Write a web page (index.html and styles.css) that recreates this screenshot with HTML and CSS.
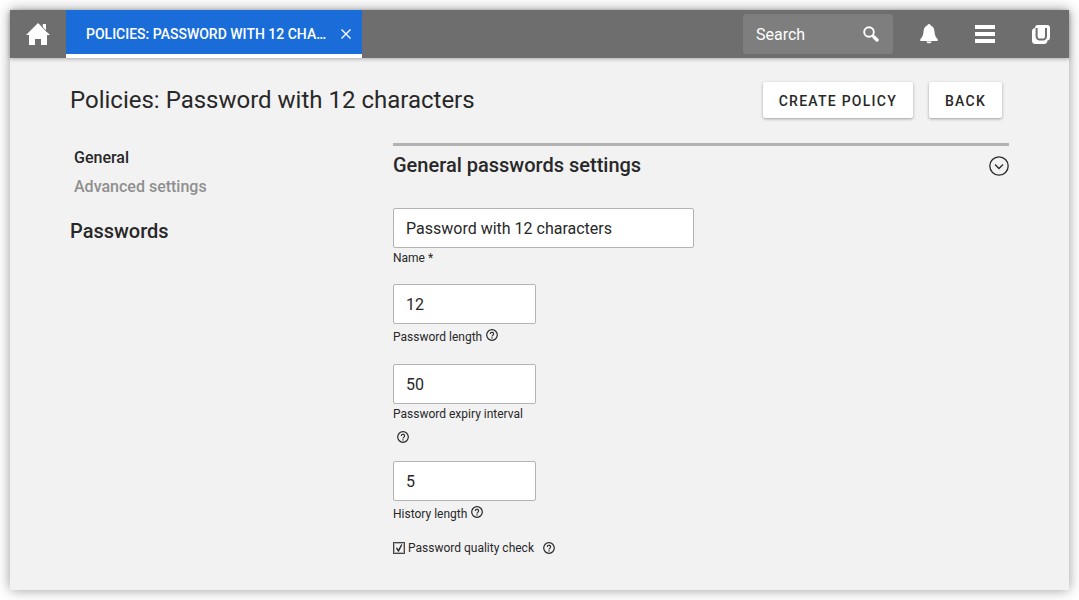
FILE: index.html
```html
<!DOCTYPE html>
<html lang="en">
<head>
<meta charset="utf-8">
<meta name="viewport" content="width=device-width, initial-scale=1">
<title>Policies: Password with 12 characters</title>
<link rel="stylesheet" href="styles.css">
</head>
<body>
<svg class="sprite" aria-hidden="true">
  <symbol id="help" viewBox="0 0 12 12">
    <circle cx="6" cy="6" r="5.3" fill="none" stroke="currentColor" stroke-width="1.2"/>
    <path d="M4.4 4.9a1.6 1.6 0 1 1 2.6 1.2C6.3 6.6 6 6.8 6 7.5" fill="none" stroke="currentColor" stroke-width="1.2"/>
    <path d="M5.4 8.2h1.2v1.2H5.4z" fill="currentColor"/>
  </symbol>
</svg>
<div class="window">
  <header class="topbar">
    <button class="icon-button" type="button" aria-label="Home">
      <svg width="24" height="24" viewBox="0 0 24 24"><path d="M12 1 L16.8 5.8 V2 H20 V9 L24 13 H21 V23 H15 V17 H9 V23 H3 V13 H0 Z" fill="#fff"/><path d="M15.8 4.6 L21.6 10.4" stroke="#6e6e6e" stroke-width="1"/></svg>
    </button>
    <div class="tab">
      <span class="tab-title">Policies: Password with 12 characters</span>
      <button class="tab-close" type="button" aria-label="Close tab">
        <svg width="10" height="10" viewBox="0 0 10 10"><path d="M.5 .5l9 9M9.5 .5l-9 9" stroke="#fff" stroke-width="1.4"/></svg>
      </button>
    </div>
    <div class="search">
      <input class="search-input" type="text" placeholder="Search" aria-label="Search">
      <svg width="16" height="16" viewBox="0 0 16 16"><circle cx="6" cy="6" r="4.8" fill="none" stroke="#fff" stroke-width="1.9"/><path d="M9.4 9.4l1.4 1.4" stroke="#fff" stroke-width="2"/><path d="M11 11l3 3" stroke="#fff" stroke-width="3.4" stroke-linecap="round"/></svg>
    </div>
    <nav class="tools">
      <button class="icon-button" type="button" aria-label="Notifications">
        <svg width="20" height="20" viewBox="0 0 20 20"><path d="M10 0a1.7 1.7 0 0 1 1.7 1.6c2.2.8 3.4 2.9 3.7 5.4.3 3.2.8 6 3.1 8 .4.4.4 1.8 0 2H1.500c-.4-.2-.4-1.600 0-2 2.300-2 2.800-4.800 3.100-8 .3-2.500 1.500-4.600 3.700-5.400A1.700 1.700 0 0 1 10 0zM7.300 17.500h5.400a2.800 2.500 0 0 1-5.400 0z" fill="#fff"/></svg>
      </button>
      <button class="icon-button" type="button" aria-label="Menu">
        <svg width="20" height="18" viewBox="0 0 20 18"><path d="M0 0h20v4H0zM0 7h20v4H0zM0 14h20v4H0z" fill="#fff"/></svg>
      </button>
      <button class="icon-button" type="button" aria-label="Portal">
        <svg width="20" height="20" viewBox="0 0 20 20"><path d="M7 1h9a3 3 0 0 1 3 3v9.500a3 3 0 0 1-2.600 3A3.500 3.500 0 0 1 13 20H4.500A3.500 3.500 0 0 1 1 16.500V7.500a3.500 3.500 0 0 1 3-3.500A3 3 0 0 1 7 1z" fill="#fff"/><path d="M5.600 4v8.500a3 3 0 0 0 3 3h3.400a3 3 0 0 0 3-3V4" fill="none" stroke="#6e6e6e" stroke-width="2"/></svg>
      </button>
    </nav>
  </header>
  <main class="page">
    <div class="page-head">
      <h1 class="page-title">Policies: Password with 12 characters</h1>
      <div class="actions">
        <button class="button" type="button">Create policy</button>
        <button class="button" type="button">Back</button>
      </div>
    </div>
    <div class="columns">
      <aside>
        <nav class="side-nav">
          <a class="side-link side-link-active" href="#general">General</a>
          <a class="side-link" href="#advanced">Advanced settings</a>
        </nav>
        <h2 class="heading">Passwords</h2>
      </aside>
      <section class="section" id="general">
        <div class="section-head">
          <h2 class="heading">General passwords settings</h2>
          <button class="toggle" type="button" aria-label="Collapse section">
            <svg width="20" height="20" viewBox="0 0 20 20" fill="none" stroke="#282828" stroke-width="1.300"><circle cx="10" cy="10" r="9.200"/><path d="M6 8.500l4 4 4-4"/></svg>
          </button>
        </div>
        <form class="form">
          <div class="field field-wide">
            <input class="text-input" id="name" type="text" value="Password with 12 characters">
            <div class="caption"><label for="name">Name *</label></div>
          </div>
          <div class="field">
            <input class="text-input" id="length" type="text" value="12">
            <div class="caption caption-help"><label for="length">Password length</label><button class="help" type="button" aria-label="Help"><svg width="12" height="12"><use href="#help"/></svg></button></div>
          </div>
          <div class="field">
            <input class="text-input" id="expiry" type="text" value="50">
            <div class="caption caption-wrapped"><label for="expiry">Password expiry interval</label><button class="help" type="button" aria-label="Help"><svg width="12" height="12"><use href="#help"/></svg></button></div>
          </div>
          <div class="field">
            <input class="text-input" id="history" type="text" value="5">
            <div class="caption caption-help"><label for="history">History length</label><button class="help" type="button" aria-label="Help"><svg width="12" height="12"><use href="#help"/></svg></button></div>
          </div>
          <div class="check-row">
            <input class="checkbox" id="quality" type="checkbox" checked>
            <label for="quality">Password quality check</label>
            <button class="help" type="button" aria-label="Help"><svg width="12" height="12"><use href="#help"/></svg></button>
          </div>
        </form>
      </section>
    </div>
  </main>
</div>
</body>
</html>
```
FILE: styles.css
```css
* { box-sizing: border-box; }

body {
  margin: 0;
  padding: 10px;
  min-height: 100vh;
  display: flex;
  background: #fff;
  color: #282828;
  font-family: Roboto, "Liberation Sans", sans-serif;
  font-size: 16px;
}

button, input { font: inherit; color: inherit; }

button {
  padding: 0;
  border: 0;
  background: none;
  cursor: pointer;
}

svg { display: block; }

.sprite { position: absolute; width: 0; height: 0; }

.window {
  flex: 1;
  min-width: 0;
  background: #f2f2f2;
  box-shadow: 0 0 12px rgba(0, 0, 0, 0.4);
}

.topbar {
  display: flex;
  height: 48px;
  background: #6e6e6e;
  box-shadow: 0 1px 4px rgba(0, 0, 0, 0.3);
  color: #fff;
}

.icon-button {
  display: flex;
  align-items: center;
  justify-content: center;
  width: 56px;
  height: 48px;
}

.tab {
  display: flex;
  align-items: center;
  gap: 12px;
  width: 296px;
  padding: 4px 11px 0 20px;
  background: #1a6dd8;
  border-bottom: 4px solid #fff;
}

.tab-title {
  flex: 1;
  overflow: hidden;
  white-space: nowrap;
  text-overflow: ellipsis;
  text-transform: uppercase;
  font-size: 14px;
  font-weight: 500;
}

.search {
  display: flex;
  align-items: center;
  width: 150px;
  height: 40px;
  margin: 4px 8px 0 auto;
  padding: 0 14px 0 13px;
  border-radius: 3px;
  background: #7e7e7e;
}

.search-input {
  flex: 1;
  min-width: 0;
  padding: 0;
  border: 0;
  outline: 0;
  background: none;
}

.search-input::placeholder { color: #fff; opacity: 1; }

.tools { display: flex; }

.page { padding: 24px 60px 30px; }

.page-head {
  display: flex;
  align-items: center;
  justify-content: space-between;
  margin-bottom: 25px;
}

.page-title { margin: 0; font-size: 24px; font-weight: 400; }

.actions { display: flex; gap: 16px; padding-right: 7px; }

.button {
  height: 36px;
  padding: 2px 16px 0;
  border-radius: 2px;
  background: #fff;
  box-shadow: 0 1px 3px rgba(0, 0, 0, 0.35);
  font-size: 14px;
  font-weight: 500;
  letter-spacing: 1.25px;
  text-transform: uppercase;
}

.columns {
  display: grid;
  grid-template-columns: 323px minmax(0, 1fr);
}

.side-nav {
  display: flex;
  flex-direction: column;
  align-items: flex-start;
  gap: 5px;
  padding: 3px 4px 16px;
}

.side-link {
  color: #8f8f8f;
  font-weight: 500;
  line-height: 24px;
  text-decoration: none;
}

.side-link-active { color: #282828; }

.heading {
  margin: 0;
  font-size: 20px;
  font-weight: 500;
  line-height: 32px;
}

.section { border-top: 3px solid #b3b3b3; }

.section-head {
  display: flex;
  align-items: center;
  justify-content: space-between;
  padding-top: 3px;
}

.toggle { padding-top: 2px; }

.form {
  display: flex;
  flex-direction: column;
  align-items: flex-start;
  gap: 16px;
  padding-top: 27px;
  font-size: 12px;
}

.field { width: 143px; }

.field-wide { width: 301px; }

.text-input {
  display: block;
  width: 100%;
  height: 40px;
  padding: 0 12px;
  border: 1px solid #b3b3b3;
  border-radius: 2px;
  background: #fff;
  font-size: 16px;
}

.caption {
  display: flex;
  flex-wrap: wrap;
  line-height: 20px;
}

.caption-help { height: 24px; line-height: 26px; }

.caption-help .help { margin-top: 5px; }

.caption-wrapped { row-gap: 7px; padding-bottom: 2px; }

.help { width: 12px; height: 12px; margin-left: 4px; }

.check-row {
  display: flex;
  align-items: center;
  gap: 3px;
  line-height: 14px;
}

.check-row .help { margin-left: 6px; }

.checkbox {
  appearance: none;
  width: 12px;
  height: 12px;
  margin: 0;
  border: 1px solid #444;
  box-shadow: inset 0 0 0 1px #b3b3b3;
}

.checkbox:checked::before {
  content: "";
  display: block;
  width: 10px;
  height: 10px;
  background: #282828;
  clip-path: polygon(18% 50%, 30% 44%, 44% 64%, 72% 12%, 84% 18%, 49% 88%, 41% 88%);
}
```
